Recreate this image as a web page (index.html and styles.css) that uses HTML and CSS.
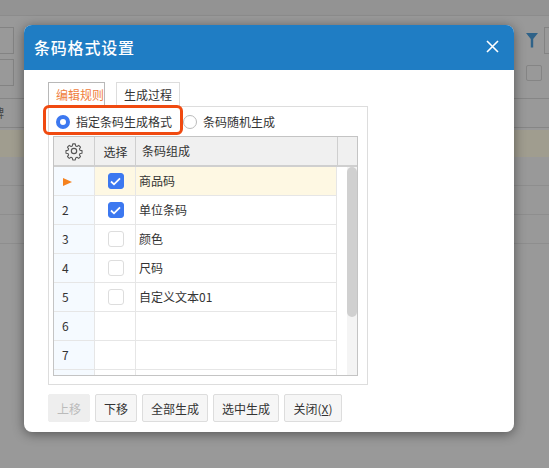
FILE: index.html
```html
<!DOCTYPE html>
<html lang="zh-CN">
<head>
  <meta charset="UTF-8">
  <meta name="viewport" content="width=device-width, initial-scale=1.0">
  <title>条码格式设置</title>
  <link rel="stylesheet" href="styles.css">
</head>
<body>

  <!-- Page behind the mask -->
  <div class="page">
    <div class="page-top"></div>
    <div class="page-tools">
      <div class="tools-left">
        <div class="ghost-input"></div>
        <div class="ghost-input"></div>
      </div>
      <div class="tools-right">
        <div class="tools-line">
          <svg class="ghost-filter" width="12" height="15" viewBox="0 0 12 15"><path d="M0 0H12L7.200 6V14.500H4.800V6Z" fill="#2f6288"/></svg>
          <div class="ghost-input"></div>
        </div>
        <div class="ghost-check"></div>
      </div>
    </div>
    <div class="page-head"><span class="head-char">牌</span></div>
    <div class="page-row page-row-on"></div>
    <div class="page-row"></div>
    <div class="page-row"></div>
    <div class="page-row"></div>
  </div>

  <!-- Dialog -->
  <div class="dialog">
    <div class="dialog-title">
      <h1>条码格式设置</h1>
      <svg width="13" height="13" viewBox="0 0 13 13"><path d="M1 1L12 12M12 1L1 12" stroke="#fff" stroke-width="1.600" fill="none"/></svg>
    </div>

    <div class="dialog-body">
      <div class="tabs">
        <div class="tab tab-on">编辑规则</div>
        <div class="tab">生成过程</div>
      </div>

      <div class="panel">
        <div class="radios">
          <label class="radio"><span class="dot dot-on"></span>指定条码生成格式</label>
          <label class="radio"><span class="dot"></span>条码随机生成</label>
        </div>

        <div class="grid">
          <div class="grid-head">
            <div class="cell-num">
              <svg width="20" height="20" viewBox="0 0 24 24" fill="none" stroke="#555" stroke-width="1.400" stroke-linejoin="round"><circle cx="12" cy="12" r="3.200"/><path d="M10.300 2.500h3.400l.5 2.700 1.800.8 2.300-1.500 2.400 2.400-1.500 2.300.8 1.800 2.700.5v3.400l-2.700.5-.8 1.800 1.500 2.300-2.400 2.400-2.300-1.500-1.800.8-.5 2.700h-3.400l-.5-2.700-1.800-.8-2.300 1.500-2.400-2.400 1.500-2.300-.8-1.800-2.700-.5v-3.400l2.700-.5.8-1.800-1.500-2.300 2.400-2.400 2.300 1.500 1.800-.8z" transform="translate(12 12) scale(.9) translate(-12 -12)"/></svg>
            </div>
            <div class="cell-check">选择</div>
            <div class="cell-name">条码组成</div>
            <div class="cell-end"></div>
          </div>

          <div class="grid-body">
            <div class="rows">
              <div class="row row-on">
                <div class="cell-num"><span class="arrow"></span></div>
                <div class="cell-check"><span class="box box-on"><svg width="11" height="9" viewBox="0 0 11 9"><path d="M1 4.500L4 7.300L10 1.300" stroke="#fff" stroke-width="1.800" fill="none"/></svg></span></div>
                <div class="cell-name">商品码</div>
              </div>
              <div class="row">
                <div class="cell-num">2</div>
                <div class="cell-check"><span class="box box-on"><svg width="11" height="9" viewBox="0 0 11 9"><path d="M1 4.500L4 7.300L10 1.300" stroke="#fff" stroke-width="1.800" fill="none"/></svg></span></div>
                <div class="cell-name">单位条码</div>
              </div>
              <div class="row">
                <div class="cell-num">3</div>
                <div class="cell-check"><span class="box"></span></div>
                <div class="cell-name">颜色</div>
              </div>
              <div class="row">
                <div class="cell-num">4</div>
                <div class="cell-check"><span class="box"></span></div>
                <div class="cell-name">尺码</div>
              </div>
              <div class="row">
                <div class="cell-num">5</div>
                <div class="cell-check"><span class="box"></span></div>
                <div class="cell-name">自定义文本01</div>
              </div>
              <div class="row">
                <div class="cell-num">6</div>
                <div class="cell-check"></div>
                <div class="cell-name"></div>
              </div>
              <div class="row">
                <div class="cell-num">7</div>
                <div class="cell-check"></div>
                <div class="cell-name"></div>
              </div>
              <div class="row">
                <div class="cell-num"></div>
                <div class="cell-check"></div>
                <div class="cell-name"></div>
              </div>
            </div>
            <div class="scroll-gap"></div>
            <div class="scroll-track"><div class="scroll-thumb"></div></div>
          </div>
        </div>
      </div>

      <div class="buttons">
        <button class="btn" disabled>上移</button>
        <button class="btn">下移</button>
        <button class="btn">全部生成</button>
        <button class="btn">选中生成</button>
        <button class="btn btn-close">关闭(<u>X</u>)</button>
      </div>
    </div>

    <!-- Red annotation round the first radio -->
    <div class="callout"></div>
  </div>

</body>
</html>
```

FILE: styles.css
```css
* {
  margin: 0;
  padding: 0;
  box-sizing: border-box;
}

body {
  width: 549px;
  height: 468px;
  overflow: hidden;
  background-color: #999;
  font-family: "Noto Sans CJK SC", "Noto Sans", sans-serif;
  font-size: 12px;
  color: #333;
}

/* Page behind the mask */
.page-top {
  height: 16px;
  background-color: #939393;
  border-bottom: 1px solid #8c8c8c;
}

.page-tools {
  height: 83px;
  display: flex;
  justify-content: space-between;
  border-bottom: 1px solid #868686;
  background-color: #999;
}

.tools-left {
  width: 14px;
  padding-top: 11px;
  display: flex;
  flex-direction: column;
  gap: 5px;
}

.tools-left .ghost-input {
  border-left: 0;
}

.ghost-input {
  height: 27px;
  width: 100%;
  border: 1px solid #838383;
}

.tools-right {
  width: 23px;
  padding-top: 11px;
}

.tools-line {
  display: flex;
  gap: 6px;
  width: 30px;
}

.ghost-filter {
  margin-top: 6px;
  flex-shrink: 0;
}

.ghost-check {
  width: 16px;
  height: 16px;
  margin-top: 11px;
  border: 1px solid #858585;
  border-radius: 2px;
}

.page-head {
  height: 29px;
  border-bottom: 1px solid #868686;
  color: #444;
  line-height: 27px;
}

.head-char {
  margin-left: -8px;
}

.page-row {
  height: 29px;
  border-bottom: 1px solid #8e8e8e;
}

.page-row-on {
  height: 27px;
  margin-top: 2px;
  border-bottom: 0;
  background-color: #a09d8f;
}

/* Dialog */
.dialog {
  position: absolute;
  left: 24px;
  top: 25px;
  width: 490px;
  height: 407px;
  background-color: #fff;
  border-radius: 8px;
  box-shadow: 0 2px 12px rgba(0, 0, 0, 0.45);
}

.dialog-title {
  height: 45px;
  padding: 0 15px 2px 10px;
  display: flex;
  justify-content: space-between;
  align-items: center;
  background-color: #1f7dc4;
  border-radius: 8px 8px 0 0;
}

.dialog-title h1 {
  font-size: 16px;
  font-weight: 500;
  letter-spacing: 0.8px;
  color: #fff;
}

.dialog-body {
  padding: 12px 24px 0;
}

.tabs {
  display: flex;
  gap: 11px;
  height: 25px;
}

.tab {
  width: 64px;
  height: 25px;
  padding-left: 7px;
  line-height: 24px;
  border: 1px solid #ddd;
  border-bottom: 0;
  background-color: #fff;
}

.tab-on {
  width: 57px;
  color: #f0803c;
  border-color: #b8b8b8;
}

.panel {
  width: 320px;
  height: 279px;
  margin-top: -1px;
  padding: 0 4px;
  border: 1px solid #ddd;
}

.radios {
  height: 29px;
  display: flex;
  gap: 11px;
  padding-left: 3px;
}

.radio {
  display: flex;
  align-items: center;
  gap: 6px;
}

.dot {
  width: 14px;
  height: 14px;
  border: 1px solid #bbb;
  border-radius: 50%;
}

.dot-on {
  border: 4px solid #3c78f0;
  background-color: #fff;
}

/* Grid */
.grid {
  width: 305px;
  height: 240px;
  border: 1px solid #c4c4c4;
  overflow: hidden;
}

.grid-head {
  display: flex;
  height: 30px;
  background-color: #f0f0f0;
  border-bottom: 2px solid #cfcfcf;
}

.grid-head > div {
  display: flex;
  align-items: center;
  border-right: 1px solid #cfcfcf;
}

.cell-num {
  width: 41px;
  flex-shrink: 0;
  padding-left: 8px;
  line-height: 28px;
  background-color: #f5faff;
  border-right: 1px solid #e6e6e6;
}

.grid-head .cell-num {
  background-color: transparent;
  justify-content: center;
  padding: 0;
}

.cell-check {
  width: 41px;
  flex-shrink: 0;
  padding-left: 1px;
  display: flex;
  align-items: center;
  justify-content: center;
  border-right: 1px solid #e6e6e6;
}

.cell-name {
  flex: 1;
  padding-left: 3px;
  line-height: 28px;
  border-right: 1px solid #e6e6e6;
}

.grid-head .cell-name {
  width: 202px;
  flex: none;
  padding-left: 6px;
}

.cell-end {
  flex: 1;
  border-right: 0 !important;
}

.grid-body {
  display: flex;
  height: 208px;
}

.rows {
  width: 283px;
}

.row {
  display: flex;
  height: 29px;
  border-bottom: 1px solid #e6e6e6;
}

.row-on .cell-check,
.row-on .cell-name {
  background-color: #fef8e3;
}

.arrow {
  display: inline-block;
  margin-left: 1px;
  border-left: 9px solid #f5821f;
  border-top: 4px solid transparent;
  border-bottom: 4px solid transparent;
}

.box {
  width: 16px;
  height: 16px;
  display: flex;
  align-items: center;
  justify-content: center;
  border: 1px solid #ddd;
  border-radius: 3px;
  background-color: #fff;
}

.box-on {
  background-color: #3c78f0;
  border-color: #3c78f0;
}

.scroll-gap {
  width: 10px;
}

.scroll-track {
  width: 10px;
  background-color: #f4f4f4;
}

.scroll-thumb {
  height: 150px;
  background-color: #d0d0d0;
  border-radius: 5px;
}

/* Buttons */
.buttons {
  display: flex;
  gap: 5px;
  margin-top: 9px;
}

.btn {
  height: 28px;
  padding: 0 8px;
  font-family: inherit;
  font-size: 12px;
  color: #333;
  background-color: #f6f6f6;
  border: 1px solid #ddd;
  border-radius: 2px;
  min-width: 42px;
}

.btn:disabled {
  color: #bbb;
  background-color: #eee;
  border-color: #eee;
}

.btn-close {
  width: 58px;
  padding: 0;
}

/* Annotation */
.callout {
  position: absolute;
  left: 19px;
  top: 80px;
  width: 140px;
  height: 30px;
  border: 3px solid #f04a10;
  border-radius: 6px;
}
```
